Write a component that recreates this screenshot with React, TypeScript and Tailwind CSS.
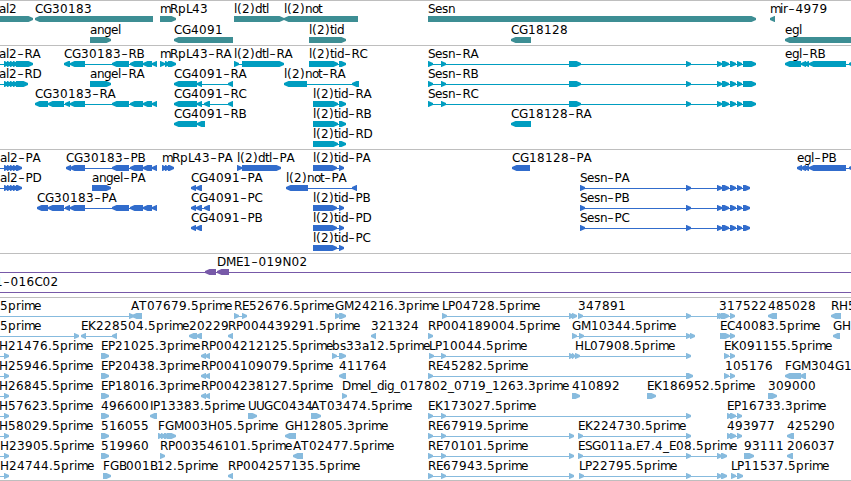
type Exon = [number, number]
type Strand = '+' | '-'
// label, label x, strand, exons, optional start/end of the intron line
type Feature = [string, number, Strand, Exon[], Exon?]

interface TrackData {
  id: string
  color: string
  rowClass: string
  trackClass: string
  rows: Feature[][]
}

const ADVANCE: Record<string, number> = {
  A: 8, B: 7, C: 8, D: 9, E: 7, F: 7, G: 9, H: 9, I: 3, K: 8, L: 6, M: 10, N: 9, O: 9,
  P: 7, R: 8, S: 7, T: 8, U: 8, a: 7, b: 8, d: 7, e: 7, g: 7, i: 3, l: 3, m: 10, n: 7,
  o: 6, p: 8, r: 5, s: 6, t: 4, '(': 5, ')': 5, '-': 7.5, '.': 4, _: 6,
}

const sesnTail: Exon[] = [[686, 691], [717, 722], [722, 729], [730, 736], [737, 742]]
const sesnR: Exon[] = [[428, 433], [441, 446], [569, 581], ...sesnTail, [743, 756]]
const sesnP: Exon[] = [[580, 585], ...sesnTail, [743, 750]]
const cg30183Tail: Exon[] = [[70, 85], [112, 129], [130, 143], [143, 152], [152, 157]]
const al2Head: Exon[] = [[4, 9], [7, 12], [10, 15], [13, 18]]
const tidR: Exon[] = [[313, 338], [339, 346]]
const tidP: Exon[] = [[313, 337], [339, 344]]
const reExons: Exon[] = [[428, 433], [441, 446], [569, 574]]

const tracks: TrackData[] = [
  {
    id: 'gene',
    color: '#3d8e94',
    rowClass: 'h-[21px]',
    trackClass: 'pb-[2px]',
    rows: [
      [
        ['al2', -1, '+', [[-10, 33]]],
        ['CG30183', 35, '-', [[35, 153]]],
        ['mRpL43', 160, '+', [[160, 176]]],
        ['l(2)dtl', 234, '+', [[234, 284]]],
        ['l(2)not', 284, '-', [[284, 358]]],
        ['Sesn', 428, '+', [[428, 756]]],
        ['mir-4979', 770, '-', [[770, 775]]],
      ],
      [
        ['angel', 90, '+', [[90, 111]]],
        ['CG4091', 174, '-', [[174, 233]]],
        ['l(2)tid', 309, '+', [[309, 346]]],
        ['CG18128', 511, '-', [[511, 531]]],
        ['egl', 785, '-', [[785, 860]]],
      ],
    ],
  },
  {
    id: 'transcript',
    color: '#009dc0',
    rowClass: 'h-5',
    trackClass: 'pb-[3px]',
    rows: [
      [
        ['al2-RA', -1, '+', [...al2Head, [16, 33]], [-5, 33]],
        ['CG30183-RB', 64, '-', [[64, 70], ...cg30183Tail]],
        ['mRpL43-RA', 160, '+', [[160, 165], [165, 170], [168, 176]]],
        ['l(2)dtl-RA', 234, '+', [[234, 239], [242, 284]]],
        ['l(2)tid-RC', 309, '+', [[309, 338], [339, 346]]],
        ['Sesn-RA', 428, '+', sesnR],
        ['egl-RB', 785, '-', [[785, 801], [801, 806], [804, 809], [809, 846], [849, 860]]],
      ],
      [
        ['al2-RD', -1, '+', [...al2Head, [16, 28]], [-5, 28]],
        ['angel-RA', 90, '+', [[90, 111]]],
        ['CG4091-RA', 174, '-', [[174, 197], [197, 202], [228, 233]]],
        ['l(2)not-RA', 284, '-', [[284, 307], [352, 359]]],
        ['Sesn-RB', 428, '+', sesnR],
      ],
      [
        ['CG30183-RA', 35, '-', [[35, 48], [48, 64], [65, 70], ...cg30183Tail]],
        ['CG4091-RC', 174, '-', [[174, 197], [197, 202], [204, 210], [228, 233]]],
        ['l(2)tid-RA', 313, '+', tidR],
        ['Sesn-RC', 428, '+', sesnR],
      ],
      [
        ['CG4091-RB', 174, '-', [[174, 197], [197, 205]]],
        ['l(2)tid-RB', 313, '+', tidR],
        ['CG18128-RA', 511, '-', [[511, 531]]],
      ],
      [['l(2)tid-RD', 313, '+', tidR]],
    ],
  },
  {
    id: 'cds',
    color: '#316ccc',
    rowClass: 'h-5',
    trackClass: 'pb-[3px]',
    rows: [
      [
        ['al2-PA', 0, '+', [...al2Head, [16, 22]], [-5, 22]],
        ['CG30183-PB', 66, '-', [[66, 71], ...cg30183Tail]],
        ['mRpL43-PA', 162, '+', [[162, 167], [165, 170], [168, 174]]],
        ['l(2)dtl-PA', 237, '+', [[237, 242], [242, 281]]],
        ['l(2)tid-PA', 313, '+', tidP],
        ['CG18128-PA', 512, '-', [[512, 530]]],
        ['egl-PB', 797, '-', [[797, 802], [801, 806], [804, 809], [809, 846], [849, 860]]],
      ],
      [
        ['al2-PD', 0, '+', [...al2Head, [16, 22]], [-5, 22]],
        ['angel-PA', 92, '+', [[92, 111]]],
        ['CG4091-PA', 191, '-', [[191, 196], [196, 202]]],
        ['l(2)not-PA', 286, '-', [[286, 308], [352, 357]]],
        ['Sesn-PA', 580, '+', sesnP],
      ],
      [
        ['CG30183-PA', 37, '-', [[37, 48], [48, 64], [65, 70], ...cg30183Tail]],
        ['CG4091-PC', 191, '-', [[191, 196], [196, 202], [204, 210]]],
        ['l(2)tid-PB', 313, '+', tidP],
        ['Sesn-PB', 580, '+', sesnP],
      ],
      [
        ['CG4091-PB', 191, '-', [[191, 196], [196, 202]]],
        ['l(2)tid-PD', 313, '+', tidP],
        ['Sesn-PC', 580, '+', sesnP],
      ],
      [['l(2)tid-PC', 313, '+', tidP]],
    ],
  },
  {
    id: 'bac',
    color: '#7759a8',
    rowClass: 'h-5',
    trackClass: 'pb-[3px]',
    rows: [
      [['DME1-019N02', 217, '-', [[205, 216], [217, 229]], [-5, 860]]],
      [['1-016C02', -5, '-', [], [-5, 860]]],
    ],
  },
  {
    id: 'est',
    color: '#87bbde',
    rowClass: 'h-5',
    trackClass: 'pb-[2px]',
    rows: [
      [
        ['5prime', 0, '+', [[129, 134]], [-5, 129]],
        ['AT07679.5prime', 131, '-', [[132, 142]]],
        ['RE52676.5prime', 234, '+', [[234, 239], [242, 247]]],
        ['GM24216.3prime', 335, '+', [[335, 340], [339, 346]]],
        ['LP04728.5prime', 442, '+', [[442, 447], [569, 574], [572, 577]]],
        ['347891', 578, '+', [[578, 583], [686, 691], [717, 722], [719, 724]]],
        ['317522', 719, '+', [[721, 729], [730, 735]]],
        ['485028', 768, '-', [[768, 777]]],
        ['RH5', 831, '-', [[831, 841]]],
      ],
      [
        ['5prime', 0, '+', [[74, 79]], [-5, 79]],
        ['EK228504.5prime', 81, '-', [[81, 86], [112, 117]]],
        ['20229', 189, '-', [[189, 197], [196, 202]]],
        ['RP004439291.5prime', 228, '-', [[228, 233]]],
        ['321324', 371, '-', [[371, 376]]],
        ['RP004189004.5prime', 428, '+', [[428, 433]]],
        ['GM10344.5prime', 572, '+', [[572, 577], [579, 584], [686, 691], [690, 695]]],
        ['EC40083.5prime', 720, '+', [[720, 726], [722, 730], [730, 735]]],
        ['GH', 833, '-', [[833, 840]]],
      ],
      [
        ['H21476.5prime', -1, '+', [[4, 9]], [-5, 9]],
        ['EP21025.3prime', 101, '+', [[101, 109]]],
        ['RP004212125.5prime', 201, '-', [[201, 206], [205, 210]]],
        ['bs33a12.5prime', 332, '+', [[332, 337], [339, 346]]],
        ['LP10044.5prime', 429, '+', [[429, 434], [441, 446], [569, 574]]],
        ['HL07908.5prime', 575, '+', [[572, 575], [575, 580], [686, 691]]],
        ['EK091155.5prime', 724, '+', [[724, 729], [730, 735]]],
      ],
      [
        ['H25946.5prime', -1, '+', [[4, 9]], [-5, 9]],
        ['EP20438.3prime', 101, '+', [[101, 109]]],
        ['RP004109079.5prime', 201, '-', [[201, 206], [205, 210]]],
        ['411764', 339, '-', [[339, 346]]],
        ['RE45282.5prime', 428, '+', [[428, 433], [686, 693]]],
        ['105176', 725, '+', [[724, 729], [730, 735]]],
        ['FGM304G1', 785, '-', [[785, 801], [800, 806]]],
      ],
      [
        ['H26845.5prime', -1, '+', [[4, 9]], [-5, 9]],
        ['EP18016.3prime', 101, '+', [[101, 109]]],
        ['RP004238127.5prime', 201, '-', [[201, 206], [205, 210]]],
        ['Dmel_dig_017802_0719_1263.3prime', 342, '+', [[342, 347]]],
        ['410892', 572, '+', [[572, 580]]],
        ['EK186952.5prime', 647, '+', [[647, 656]]],
        ['309000', 768, '+', [[768, 777]]],
      ],
      [
        ['H57623.5prime', -1, '+', [[4, 9]], [-5, 9]],
        ['496600', 101, '+', [[101, 109]]],
        ['IP13383.5prime', 150, '-', [[150, 157]]],
        ['UUGC0434', 248, '+', [[248, 257]]],
        ['AT03474.5prime', 311, '+', [[311, 321]]],
        ['EK173027.5prime', 428, '+', [[428, 433], [441, 446], [686, 691]]],
        ['EP16733.3prime', 727, '+', [[727, 732], [730, 736], [737, 742]]],
      ],
      [
        ['H58029.5prime', -1, '+', [[4, 9]], [-5, 9]],
        ['516055', 101, '+', [[101, 109]]],
        ['FGM003H05.5prime', 158, '+', [[158, 163], [161, 166], [164, 170], [167, 176]]],
        ['GH12805.3prime', 285, '-', [[285, 296]]],
        ['RE67919.5prime', 428, '+', reExons],
        ['EK224730.5prime', 578, '+', [[578, 583], [686, 691]]],
        ['493977', 727, '+', [[727, 732], [730, 736], [737, 742]]],
        ['425290', 787, '-', [[787, 794]]],
      ],
      [
        ['H23905.5prime', 0, '+', [[4, 9]], [-5, 9]],
        ['519960', 101, '+', [[101, 109]]],
        ['RP003546101.5prime', 160, '+', [[160, 165]]],
        ['AT02477.5prime', 293, '-', [[293, 303]]],
        ['RE70101.5prime', 428, '+', reExons],
        ['ESG011a.E7.4_E08.5prime', 578, '+', [[578, 583], [686, 691], [717, 722], [721, 727]]],
        ['93111', 744, '+', [[744, 754]]],
        ['206037', 787, '-', [[787, 793]]],
      ],
      [
        ['H24744.5prime', 0, '+', [[4, 9]], [-5, 9]],
        ['FGB001B12.5prime', 103, '+', [[103, 111]]],
        ['RP004257135.5prime', 228, '-', [[228, 233]]],
        ['RE67943.5prime', 428, '+', reExons],
        ['LP22795.5prime', 579, '+', [[579, 584], [686, 691], [717, 722], [721, 727]]],
        ['LP11537.5prime', 731, '+', [[731, 736], [737, 743]]],
      ],
    ],
  },
]

function glyphPositions(label: string, x: number) {
  const xs: number[] = []
  let pos = x
  for (const ch of label) {
    xs.push(ch === '-' ? pos + 0.5 : pos)
    pos += ADVANCE[ch] ?? 8
  }
  return xs.join(' ')
}

function exonPoints([start, end]: Exon, strand: Strand) {
  const head = Math.min(5, end - start)
  if (strand === '+') {
    const neck = end - head
    return `${start},15 ${neck + 0.5},15 ${end},17 ${end},19 ${neck + 0.5},21 ${start},21`
  }
  const neck = start + head
  return `${end},15 ${neck - 0.5},15 ${start},17 ${start},19 ${neck - 0.5},21 ${end},21`
}

function FeatureGlyph({ feature }: { feature: Feature }) {
  const [label, x, strand, exons, span] = feature
  const [from, to] = span ?? [exons[0][0], exons[exons.length - 1][1]]
  return (
    <g>
      {(span || exons.length > 1) && <rect x={from} y={18} width={to - from} height={1} shapeRendering="crispEdges" />}
      {exons.map((exon, i) => (
        <polygon key={i} points={exonPoints(exon, strand)} />
      ))}
      <text x={glyphPositions(label, x)} y={12} className="fill-black">
        {label.replace('-', '–')}
      </text>
    </g>
  )
}

function Track({ track }: { track: TrackData }) {
  return (
    <section className={`flex flex-col border-b border-[#bebebe] ${track.trackClass}`}>
      {track.rows.map((row, i) => (
        <div key={i} className={track.rowClass}>
          <svg width={851} height={22} fill={track.color} className="block overflow-visible">
            {row.map((feature, j) => (
              <FeatureGlyph key={j} feature={feature} />
            ))}
          </svg>
        </div>
      ))}
    </section>
  )
}

export default function App() {
  return (
    <main className="h-[481px] w-[851px] overflow-hidden border-t border-[#bebebe] bg-white font-['DejaVu_Sans',sans-serif] text-[12px]">
      {tracks.map((track) => (
        <Track key={track.id} track={track} />
      ))}
    </main>
  )
}
